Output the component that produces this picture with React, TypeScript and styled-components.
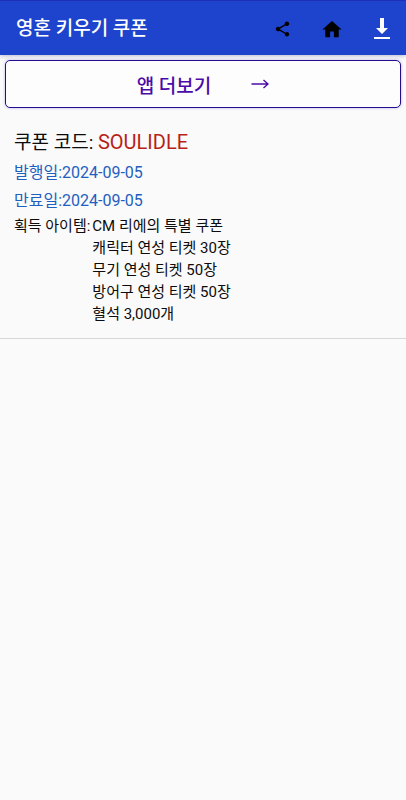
import React from "react";
import styled, { createGlobalStyle } from "styled-components";

const GlobalStyle = createGlobalStyle`
  * { box-sizing: border-box; }
  body {
    margin: 0;
    background: #fafafa;
    color: #0c0c0c;
    font-family: Roboto, "Noto Sans CJK KR", sans-serif;
  }
`;

const TopBar = styled.header`
  display: flex;
  align-items: center;
  justify-content: space-between;
  height: 55px;
  padding: 2px 10px 0 16px;
  background: #1e43cc;
  border-top: 1px solid #1c2fb8;
  box-shadow: 0 1px 4px rgba(30, 40, 120, 0.3);
`;

const Title = styled.h1`
  margin: 0;
  color: #fff;
  font-size: 19px;
  line-height: 28px;
  font-weight: 500;
`;

const Actions = styled.nav`
  display: flex;
  gap: 22px;
`;

const IconButton = styled.button<{ $tone: string }>`
  display: flex;
  align-items: center;
  justify-content: center;
  width: 28px;
  height: 28px;
  padding: 0;
  border: 0;
  background: none;
  color: ${(p) => p.$tone};
  cursor: pointer;
`;

const MoreApps = styled.button`
  display: flex;
  align-items: center;
  justify-content: center;
  gap: 40px;
  width: calc(100% - 10px);
  height: 48px;
  margin: 5px;
  padding: 0;
  border: 1px solid #250c8c;
  border-radius: 5px;
  background: #fdfdfd;
  box-shadow: 0 0 3px rgba(90, 70, 220, 0.4);
  color: #4c0ba8;
  font: inherit;
  font-size: 19px;
  font-weight: 500;
  cursor: pointer;
`;

const Coupon = styled.article`
  padding: 14px 14px 13px;
  border-bottom: 1px solid #d8d8d8;
`;

const Code = styled.h2`
  margin: 0 0 1px;
  font-size: 19px;
  line-height: 30px;
  font-weight: 400;
`;

const CodeValue = styled.span`
  color: #b81f18;
  font-size: 20px;
`;

const DateLine = styled.p`
  margin: 0;
  color: #1f60bf;
  font-size: 16px;
  line-height: 28px;
`;

const Reward = styled.div`
  display: flex;
  gap: 2px;
  font-size: 15px;
  line-height: 22px;
`;

const RewardList = styled.ul`
  margin: 0;
  padding: 0;
  list-style: none;
`;

const rewards = [
  "CM 리에의 특별 쿠폰",
  "캐릭터 연성 티켓 30장",
  "무기 연성 티켓 50장",
  "방어구 연성 티켓 50장",
  "혈석 3,000개",
];

const ShareIcon = () => (
  <svg width="19" height="18" viewBox="0 0 24 24" fill="currentColor" aria-hidden="true">
    <path d="M18 16.08c-.76 0-1.44.3-1.96.77L8.91 12.7c.05-.23.09-.46.09-.7s-.04-.47-.09-.7l7.05-4.11c.54.5 1.25.81 2.04.81 1.66 0 3-1.34 3-3s-1.34-3-3-3-3 1.34-3 3c0 .24.04.47.09.7L8.04 9.81C7.5 9.31 6.79 9 6 9c-1.66 0-3 1.34-3 3s1.34 3 3 3c.79 0 1.5-.31 2.04-.81l7.12 4.16c-.05.21-.08.43-.08.65 0 1.61 1.31 2.92 2.92 2.92s2.92-1.31 2.92-2.92-1.31-2.92-2.92-2.92z" />
  </svg>
);

const HomeIcon = () => (
  <svg width="24" height="23" viewBox="0 0 24 24" fill="currentColor" aria-hidden="true">
    <path d="M10 20v-6h4v6h5v-8h3L12 3 2 12h3v8z" />
  </svg>
);

const DownloadIcon = () => (
  <svg width="16" height="22" viewBox="0 0 16 22" fill="currentColor" aria-hidden="true">
    <path d="M6 0h4v10h4L8 16 2 10h4zM0 19h16v2H0z" />
  </svg>
);

const ArrowIcon = () => (
  <svg width="18" height="10" viewBox="0 0 18 10" fill="none" stroke="currentColor" strokeWidth="1.4" aria-hidden="true">
    <path d="M0.5 5H17M12.5 1L17 5l-4.5 4" />
  </svg>
);

export default function App() {
  return (
    <>
      <GlobalStyle />
      <TopBar>
        <Title>영혼 키우기 쿠폰</Title>
        <Actions>
          <IconButton $tone="#000" aria-label="공유"><ShareIcon /></IconButton>
          <IconButton $tone="#000" aria-label="홈"><HomeIcon /></IconButton>
          <IconButton $tone="#fff" aria-label="다운로드"><DownloadIcon /></IconButton>
        </Actions>
      </TopBar>
      <main>
        <MoreApps>
          <span>앱 더보기</span>
          <ArrowIcon />
        </MoreApps>
        <Coupon>
          <Code>쿠폰 코드: <CodeValue>SOULIDLE</CodeValue></Code>
          <DateLine>발행일:2024-09-05</DateLine>
          <DateLine>만료일:2024-09-05</DateLine>
          <Reward>
            <span>획득 아이템:</span>
            <RewardList>
              {rewards.map((r) => <li key={r}>{r}</li>)}
            </RewardList>
          </Reward>
        </Coupon>
      </main>
    </>
  );
}
